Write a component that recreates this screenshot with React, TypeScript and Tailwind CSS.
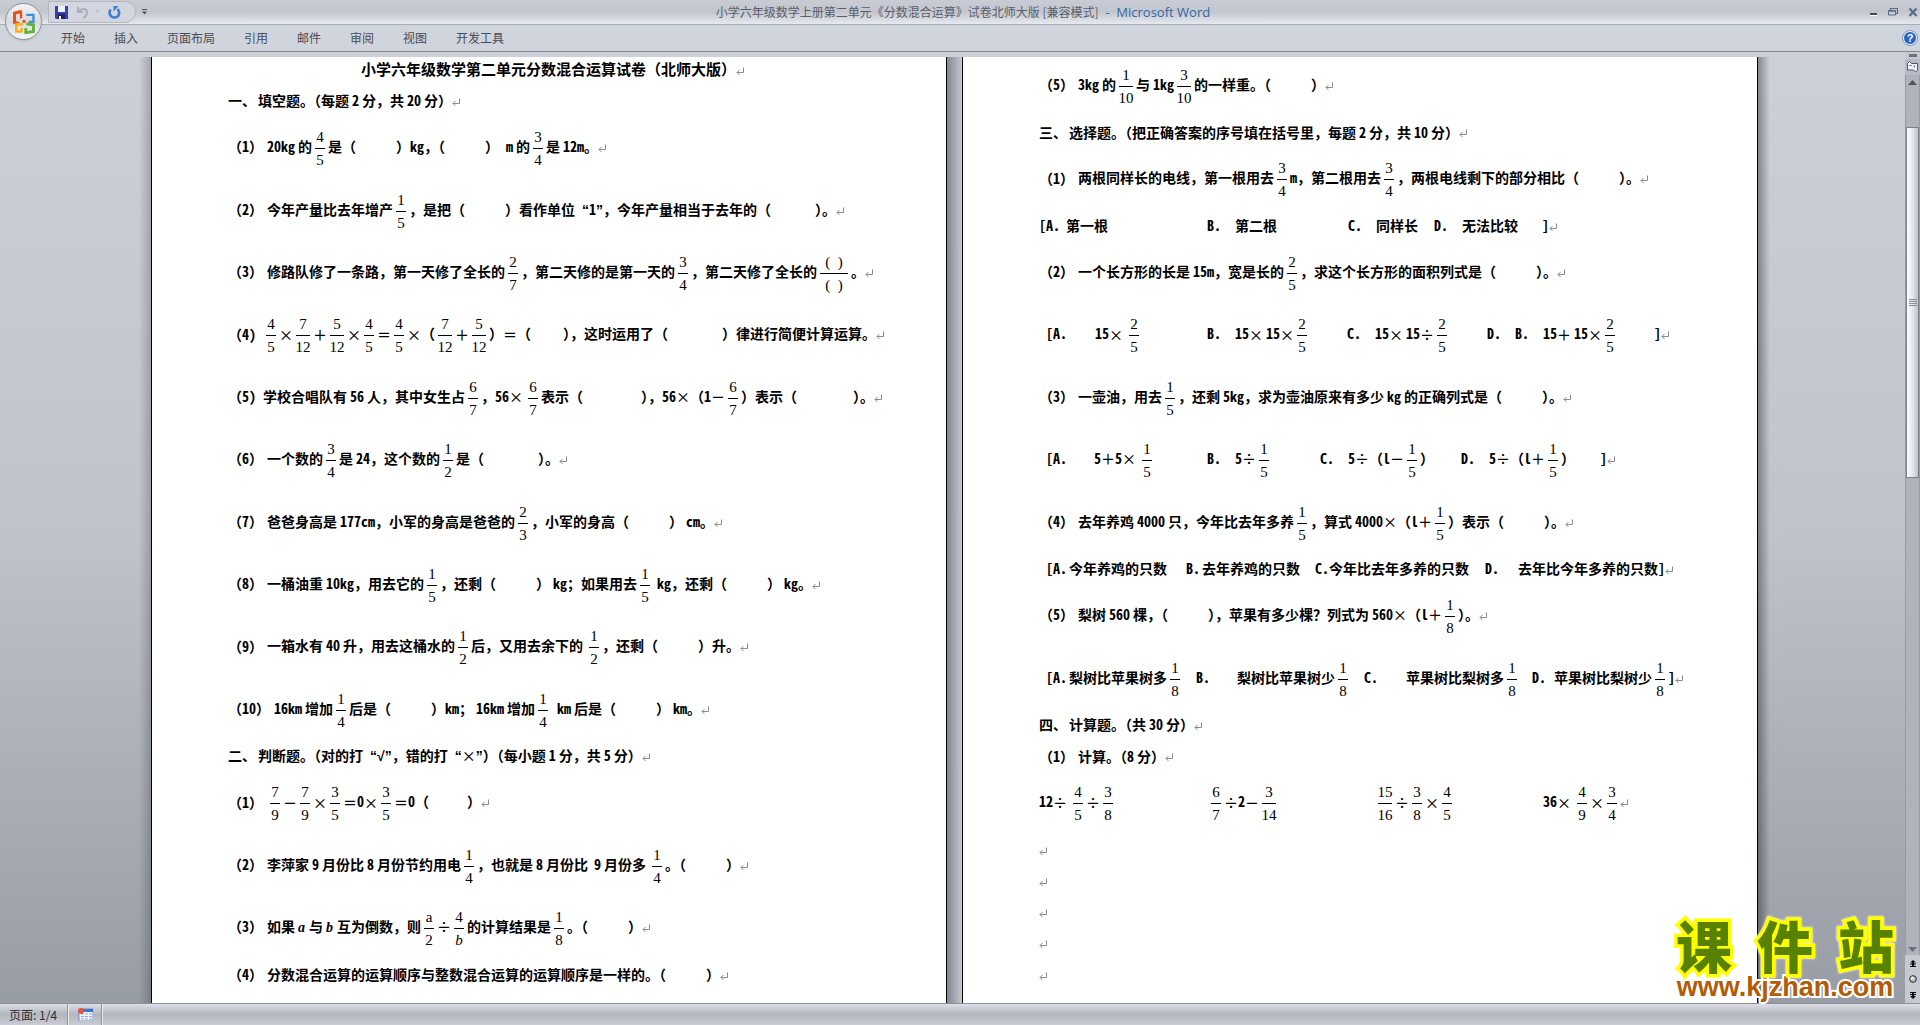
import { Fragment, ReactNode } from 'react';

type Line = {
  text: string;
  label?: string;
  // number labels come in three widths depending on the brackets used
  labelSize?: 'narrow' | 'wide';
  kind?: 'title' | 'heading';
  tall?: boolean;
};

const MENU = ['开始', '插入', '页面布局', '引用', '邮件', '审阅', '视图', '开发工具'];

// Markup used in the lines below:
//   {a/b}  fraction      {_n}  blank of n pixels
//   {*a}   italic letter ~     small gap between Chinese and Latin text
const LEFT_PAGE: Line[] = [
  { kind: 'title', text: '小学六年级数学第二单元分数混合运算试卷（北师大版）' },
  { kind: 'heading', text: '一、{_2}填空题。（每题~2~分，共~20~分）' },
  { label: '（1）', tall: true, text: '20kg~的{4/5}是（{_40}）kg，（{_40}）{_7}m~的{3/4}是~12m。' },
  { label: '（2）', tall: true, text: '今年产量比去年增产{1/5}，是把（{_40}）看作单位{_7}“1”，今年产量相当于去年的（{_44}）。' },
  { label: '（3）', tall: true, text: '修路队修了一条路，第一天修了全长的{2/7}，第二天修的是第一天的{3/4}，第二天修了全长的{( )/( )}。' },
  { label: '（4)', labelSize: 'narrow', tall: true, text: '{4/5}×{7/12}＋{5/12}×{4/5}＝{4/5}×（{7/12}＋{5/12}）＝（{_32}），这时运用了（{_54}）律进行简便计算运算。' },
  { label: '（5)', labelSize: 'narrow', tall: true, text: '学校合唱队有~56~人，其中女生占{6/7}，56×{_2}{6/7}表示（{_58}），56×（1－{6/7}）表示（{_56}）。' },
  { label: '（6）', tall: true, text: '一个数的{3/4}是~24，这个数的{1/2}是（{_54}）。' },
  { label: '（7）', tall: true, text: '爸爸身高是~177cm，小军的身高是爸爸的{2/3}，小军的身高（{_40}）~cm。' },
  { label: '（8）', tall: true, text: '一桶油重~10kg，用去它的{1/5}，还剩（{_40}）~kg；如果用去{1/5}{_4}kg，还剩（{_40}）~kg。' },
  { label: '（9）', tall: true, text: '一箱水有~40~升，用去这桶水的{1/2}后，又用去余下的~{1/2}，还剩（{_40}）升。' },
  { label: '（10）', labelSize: 'wide', tall: true, text: '16km~增加{1/4}后是（{_40}）km；~16km~增加{1/4}{_6}km~后是（{_40}）~km。' },
  { kind: 'heading', text: '二、{_2}判断题。（对的打{_7}“√”，错的打{_7}“×”）（每小题~1~分，共~5~分）' },
  { label: '（1）', tall: true, text: '{7/9}－{7/9}×{3/5}＝0×{3/5}＝0（{_38}）' },
  { label: '（2）', tall: true, text: '李萍家~9~月份比~8~月份节约用电{1/4}，也就是~8~月份比{_6}9~月份多~{1/4}。（{_40}）' },
  { label: '（3）', tall: true, text: '如果~{*a}~与~{*b}~互为倒数，则{a/2}÷{4/b}的计算结果是{1/8}。（{_40}）' },
  { label: '（4）', text: '分数混合运算的运算顺序与整数混合运算的运算顺序是一样的。（{_40}）' },
];

const RIGHT_PAGE: Line[] = [
  { label: '（5）', tall: true, text: '3kg~的{1/10}与~1kg{3/10}的一样重。（{_40}）' },
  { kind: 'heading', text: '三、{_2}选择题。（把正确答案的序号填在括号里，每题~2~分，共~10~分）' },
  { label: '（1）', tall: true, text: '两根同样长的电线，第一根用去{3/4}m，第二根用去{3/4}，两根电线剩下的部分相比（{_40}）。' },
  { text: '[A.{_6}第一根{_99}B.{_14}第二根{_71}C.{_14}同样长{_16}D.{_14}无法比较{_24}]' },
  { label: '（2）', tall: true, text: '一个长方形的长是~15m，宽是长的{2/5}，求这个长方形的面积列式是（{_40}）。' },
  { tall: true, text: '{_7}[A.{_28}15×{_3}{2/5}{_65}B.{_14}15×~15×{2/5}{_37}C.{_14}15×~15÷{2/5}{_37}D.{_14}B.{_14}15＋~15×{2/5}{_36}]' },
  { label: '（3）', tall: true, text: '一壶油，用去{1/5}，还剩~5kg，求为壶油原来有多少~kg~的正确列式是（{_40}）。' },
  { tall: true, text: '{_7}[A.{_27}5＋5×~{1/5}{_52}B.{_14}5÷{1/5}{_48}C.{_14}5÷（l－{1/5}）{_27}D.{_14}5÷（l＋{1/5}）{_25}]' },
  { label: '（4）', tall: true, text: '去年养鸡~4000~只，今年比去年多养{1/5}，算式~4000×（l＋{1/5}）表示（{_40}）。' },
  { text: '{_7}[A.{_2}今年养鸡的只数{_19}B.{_2}去年养鸡的只数{_15}C.今年比去年多养的只数{_16}D.{_19}去年比今年多养的只数]' },
  { label: '（5）', tall: true, text: '梨树~560~棵，（{_40}），苹果有多少棵？列式为~560×（l＋{1/8}）。' },
  { tall: true, text: '{_7}[A.{_2}梨树比苹果树多{1/8}{_13}B.{_27}梨树比苹果树少{1/8}{_13}C.{_28}苹果树比梨树多{1/8}{_12}D.{_8}苹果树比梨树少{1/8}]' },
  { kind: 'heading', text: '四、{_2}计算题。（共~30~分）' },
  { label: '（1）', text: '计算。（8~分）' },
  { tall: true, text: '12÷~{4/5}÷{3/8}{_92}{6/7}÷2－{3/14}{_96}{15/16}÷{3/8}×{4/5}{_88}36×~{4/9}×{3/4}' },
  { text: '' },
  { text: '' },
  { text: '' },
  { text: '' },
  { text: '' },
];

function Fraction({ top, bottom }: { top: string; bottom: string }) {
  const longest = Math.max(top.length, bottom.length);
  const width = longest === 1 ? 'w-[10px]' : longest === 2 ? 'w-[14px]' : 'w-[28px]';
  return (
    <span className={`mx-[3px] inline-flex flex-col items-center align-middle font-['Liberation_Serif',serif] text-[15px] leading-4 font-normal whitespace-pre ${width}`}>
      <span className={top === 'b' ? 'italic' : ''}>{top === '( )' ? '(  )' : top}</span>
      <span className="my-[3px] h-px w-full bg-black" />
      <span className={bottom === 'b' ? 'italic' : ''}>{bottom === '( )' ? '(  )' : bottom}</span>
    </span>
  );
}

function ReturnMark() {
  return (
    <svg className="inline-block align-middle" width="8" height="9" viewBox="0 0 8 9" fill="none" stroke="#8a8a8a">
      <path d="M7.5 0.5V5.5H1M3.5 3L1 5.5L3.5 8" />
    </svg>
  );
}

function renderToken(token: string): ReactNode {
  if (token === '~') return <span className="inline-block w-[3px]" />;
  if (token.startsWith('{_')) {
    return <span className="inline-block" style={{ width: parseInt(token.slice(2)) }} />;
  }
  if (token.startsWith('{*')) {
    return <i className="inline-block w-[8px] font-['Liberation_Serif',serif]">{token[2]}</i>;
  }
  if (token.startsWith('{')) {
    const [top, bottom] = token.slice(1, -1).split('/');
    return <Fraction top={top} bottom={bottom} />;
  }
  if (/^[×÷＋－＝]$/.test(token)) {
    return <span className="inline-block w-[14px] text-center font-medium">{token}</span>;
  }
  if (/^[“”√]+$/.test(token)) {
    return <span className="font-['Liberation_Sans',sans-serif]">{token}</span>;
  }
  if (/^[\x20-\x7e]+$/.test(token)) {
    return <span className="[font-feature-settings:'hwid']">{token}</span>;
  }
  return token;
}

function RichText({ text }: { text: string }) {
  const tokens = text.split(/(\{[^}]*\}|~|[×÷＋－＝]|[“”√]+|[A-Za-z0-9.[\]]+)/).filter(Boolean);
  return (
    <>
      {tokens.map((token, i) => (
        <Fragment key={i}>{renderToken(token)}</Fragment>
      ))}
    </>
  );
}

function DocLine({ line }: { line: Line }) {
  const labelWidth =
    line.labelSize === 'narrow' ? 'w-[35px]' : line.labelSize === 'wide' ? 'w-[46px]' : 'w-[39px]';
  const size = line.kind === 'title' ? 'justify-center pl-[7px] text-[15px]' : 'text-[14px]';
  const Tag = line.kind === 'title' ? 'h1' : line.kind === 'heading' ? 'h2' : 'p';
  return (
    <Tag className={`flex basis-0 items-center leading-5 font-bold whitespace-nowrap ${size} ${line.tall ? 'grow-2' : 'grow'}`}>
      <span className={line.tall ? '' : 'pb-[3px]'}>
        {line.label && (
          <span className={`inline-block ${labelWidth}`}>
            <RichText text={line.label} />
          </span>
        )}
        <RichText text={line.text} />
        <ReturnMark />
      </span>
    </Tag>
  );
}

function Page({ lines }: { lines: Line[] }) {
  return (
    <article className="flex w-[796px] shrink-0 flex-col overflow-hidden border-x border-black bg-white px-[76px] pb-3 text-black">
      <div className="-mt-0.5 flex grow flex-col">
        {lines.map((line, i) => (
          <DocLine key={i} line={line} />
        ))}
      </div>
    </article>
  );
}

function OfficeLogo() {
  return (
    <svg width="24" height="26" viewBox="0 0 20 22" fill="none">
      <path d="M8 2L2 3.5V11.5L6 12.5" stroke="#e2531b" strokeWidth="2.6" />
      <path d="M7.5 2V8" stroke="#e2531b" strokeWidth="2" />
      <path d="M12 5H18V11H14" stroke="#3f8fdc" strokeWidth="2" />
      <path d="M9 13H3.5V19H8V16" stroke="#f5b21a" strokeWidth="2.2" />
      <path d="M11.5 16V20L18 19V13.5L12 12.5" stroke="#5fb234" strokeWidth="2.4" />
      <circle cx="10" cy="10.5" r="1.4" fill="#e2531b" />
    </svg>
  );
}

function TitleBar() {
  return (
    <header className="relative shrink-0">
      <div className="grid h-6 grid-cols-[1fr_auto_1fr] items-center bg-linear-to-b from-[#c9ccd5] via-[#c3c6ce] to-[#e6e9f0]">
        <div className="flex h-full items-center pl-12">
          <div className="flex h-[22px] w-[88px] items-center gap-2 rounded-r-full border border-[#b3b7c0] bg-[#d3d6de] pl-1.5">
            <button aria-label="保存">
              <svg width="13" height="13" viewBox="0 0 13 13">
                <path d="M0 0H13V13H1L0 12Z" fill="#3a3fb0" />
                <path d="M3 0H10V6H3Z" fill="#eef1fb" />
                <path d="M3 8H10V13H3Z" fill="#20236b" />
                <path d="M4 10H6V13H4Z" fill="#fff" />
              </svg>
            </button>
            <button aria-label="撤消" className="flex items-center gap-1.5">
              <svg width="13" height="13" viewBox="0 0 13 13" fill="none">
                <path d="M2 1V6H7M2.5 5.5C5 2 10.5 2 11 6C11.2 9 9 11 7 12" stroke="#a9afbc" strokeWidth="2" />
              </svg>
              <svg width="5" height="4" viewBox="0 0 5 4">
                <path d="M0 0H5L2.5 3Z" fill="#b9bdc7" />
              </svg>
            </button>
            <button aria-label="恢复">
              <svg width="13" height="13" viewBox="0 0 13 13" fill="none">
                <path d="M2.5 3.5C0.5 7 2 11.5 6.5 11.5C11 11.5 12.5 6.5 9.5 3" stroke="#3b7fd0" strokeWidth="2.6" />
                <path d="M5.5 0.5H11.5V6Z" fill="#3b7fd0" transform="rotate(-90 8 3)" />
              </svg>
            </button>
          </div>
          <button aria-label="自定义快速访问工具栏" className="ml-1.5">
            <svg width="5" height="6" viewBox="0 0 5 6" fill="#50545e">
              <path d="M0 0H5V1H0ZM0 2.5H5L2.5 5.5Z" />
            </svg>
          </button>
        </div>
        <p className="pl-1.5 text-[12px] leading-4 whitespace-pre text-[#5a5e6b]">
          小学六年级数学上册第二单元《分数混合运算》试卷北师大版 [兼容模式]
          <span className="font-['Open_Sans','Noto_Sans_CJK_SC',sans-serif] text-[13px] text-[#2f68a6]">{'  -  Microsoft Word'}</span>
        </p>
        <div className="flex items-center justify-end gap-2.5 pr-0.5">
          <button aria-label="最小化">
            <svg width="8" height="10" viewBox="0 0 8 10">
              <path d="M0 6H7V8H0Z" fill="#43474f" />
              <path d="M0 8H7V9H0Z" fill="#fff" />
            </svg>
          </button>
          <button aria-label="还原">
            <svg width="10" height="8" viewBox="0 0 10 8" fill="none" stroke="#5b6b88">
              <path d="M2.5 2V0.5H9.5V5.5H8" strokeWidth="1.2" />
              <path d="M0.5 2.5H7.5V7H0.5ZM0.5 3.2H7.5" />
            </svg>
          </button>
          <button aria-label="关闭">
            <svg width="10" height="9" viewBox="0 0 10 9" stroke="#5c6b86" strokeWidth="2.2">
              <path d="M1.5 0.5L8.5 8M8.5 0.5L1.5 8" />
            </svg>
          </button>
        </div>
      </div>

      <nav className="flex h-7 items-center justify-between border-t border-b border-t-[#a9adb6] border-b-[#84878e] bg-[#d0d4dc] pr-[3px] pl-[61px]">
        <div className="flex gap-[29px]">
          {MENU.map((item) => (
            <button key={item} className="text-[12px] leading-4 text-[#484c56]">
              {item}
            </button>
          ))}
        </div>
        <button
          aria-label="帮助"
          className="flex h-[14px] w-[14px] items-center justify-center rounded-full border border-white bg-[#2563c9] font-['Liberation_Sans',sans-serif] text-[11px] leading-3 font-bold text-white outline outline-[#7d97c4]"
        >
          ?
        </button>
      </nav>

      {/* Office button hangs over both bars */}
      <button
        aria-label="Office 按钮"
        className="absolute top-[3px] left-[5px] flex h-[37px] w-[37px] items-center justify-center rounded-full border border-[#8f939b] bg-linear-to-b from-[#f4f4f6] via-[#d8dade] to-[#f6f6f8] shadow"
      >
        <OfficeLogo />
      </button>
    </header>
  );
}

function ScrollBar() {
  return (
    <aside className="flex w-[15px] shrink-0 flex-col items-center bg-[#c6c9d1]">
      <span className="mt-0.5 h-[3px] w-2 shrink-0 bg-[#6d7078]" />
      <button aria-label="标尺" className="mt-0.5 flex h-4 w-full shrink-0 items-center justify-center bg-[#b8bbc3]">
        <svg width="13" height="12" viewBox="0 0 13 12" fill="#f3f0f6" stroke="#43597a">
          <path d="M1.5 2.5L3.5 0.5L5.5 2.5H11.5V9L9.5 11L7.5 9H1.5Z" />
          <path d="M3.5 4.5H5.5M8.5 4.5V6.5" />
        </svg>
      </button>
      <div className="flex w-full grow flex-col items-center border-x border-[#989ba3] bg-[#b0b3bb]">
        <button aria-label="向上滚动" className="flex h-[52px] shrink-0 justify-center pt-[5px]">
          <svg width="9" height="5" viewBox="0 0 9 5">
            <path d="M4.5 0L9 5H0Z" fill="#50545f" />
          </svg>
        </button>
        <div className="flex w-full grow-[349] basis-0 flex-col items-center justify-center gap-px border border-[#7d8088] bg-linear-to-r from-[#fffff5] via-[#e6e6f0] to-[#bfc3cd]">
          <span className="h-px w-2 bg-[#8b8e93]" />
          <span className="h-px w-2 bg-[#8b8e93]" />
          <span className="h-px w-2 bg-[#8b8e93]" />
          <span className="h-px w-2 bg-[#8b8e93]" />
        </div>
        <div className="grow-[465] basis-0" />
        <button aria-label="向下滚动" className="flex h-3 shrink-0 items-center">
          <svg width="9" height="5" viewBox="0 0 9 5">
            <path d="M0 0H9L4.5 5Z" fill="#6b7484" />
          </svg>
        </button>
      </div>
      <button aria-label="前一页" className="flex h-4 shrink-0 items-center">
        <svg width="6" height="7" viewBox="0 0 6 7">
          <path d="M3 0L6 2.5H4V3.5H6V4.5H4V6H6V7H0V6H2V4.5H0V3.5H2V2.5H0Z" fill="#111" />
        </svg>
      </button>
      <button aria-label="选择浏览对象" className="flex h-4 shrink-0 items-center">
        <svg width="8" height="8" viewBox="0 0 8 8">
          <circle cx="4" cy="4" r="3.3" fill="#c7c7c3" stroke="#222" />
          <circle cx="3" cy="3" r="1.2" fill="#fff" />
        </svg>
      </button>
      <button aria-label="下一页" className="flex h-4 shrink-0 items-center">
        <svg width="6" height="7" viewBox="0 0 6 7">
          <path d="M0 0H6V1H4V2H6V3H4V4H6L3 7L0 4H2V3H0V2H2V1H0Z" fill="#111" />
        </svg>
      </button>
    </aside>
  );
}

function StatusBar() {
  return (
    <footer className="flex h-[22px] shrink-0 items-stretch border-t border-[#8d9098] bg-linear-to-b from-[#dcdfe6] via-[#b3b6be] to-[#c9ccd4] text-[12px] text-[#2e3036]">
      <span className="flex w-[68px] items-center border-r border-[#8f929a] pl-[9px]">
        页面: 1/4
      </span>
      <button aria-label="录制宏" className="flex w-[34px] items-center justify-center border-r border-l border-r-[#8f929a] border-l-[#eceef2]">
        <svg width="15" height="13" viewBox="0 0 15 13">
          <path d="M1 1H15V13H1Z" fill="#f1f4fb" stroke="#5c7fb8" strokeWidth="0.8" />
          <path d="M1 1H15V4H1Z" fill="#3f74d2" />
          <path d="M3 6H6M7 6H10M11 6H14M3 8.5H6M7 8.5H10M11 8.5H14M3 11H6M7 11H10M11 11H14" stroke="#8fa9d6" />
          <circle cx="3" cy="3" r="3" fill="#e0563a" />
        </svg>
      </button>
      <span className="border-l border-[#eceef2]" />
    </footer>
  );
}

function SiteBadge() {
  return (
    <div className="absolute right-[7px] bottom-[2px] w-[226px]">
      <div className="flex justify-between px-1 text-[56px] leading-[58px] font-black text-[#588100] drop-shadow-[0_0_1px_white] [-webkit-text-stroke:7px_#ffff00] [paint-order:stroke_fill]">
        <span>课</span>
        <span>件</span>
        <span>站</span>
      </div>
      <p className="text-center font-['Liberation_Sans',sans-serif] text-[27px] leading-7 font-bold text-[#b05c08] [-webkit-text-stroke:4px_#ffffff] [paint-order:stroke_fill]">
        www.kjzhan.com
      </p>
    </div>
  );
}

export default function App() {
  return (
    <div className="flex h-screen flex-col overflow-hidden bg-[#cdd0d8] font-['Noto_Sans_CJK_SC',sans-serif]">
      <TitleBar />
      <div className="flex min-h-0 grow">
        <main className="relative flex min-w-0 grow justify-center bg-linear-to-b from-[#cdd0d8] via-[#c0c3cb] to-[#989ca5] pt-[5px] pl-1">
          <div className="w-3 bg-linear-to-r from-transparent to-black/20" />
          <Page lines={LEFT_PAGE} />
          <div className="w-[15px] shrink-0 bg-linear-to-r from-[#85888f] to-[#c4c7d0]" />
          <Page lines={RIGHT_PAGE} />
          <div className="w-3 bg-linear-to-r from-black/35 to-transparent" />
          <SiteBadge />
        </main>
        <ScrollBar />
      </div>
      <StatusBar />
    </div>
  );
}
